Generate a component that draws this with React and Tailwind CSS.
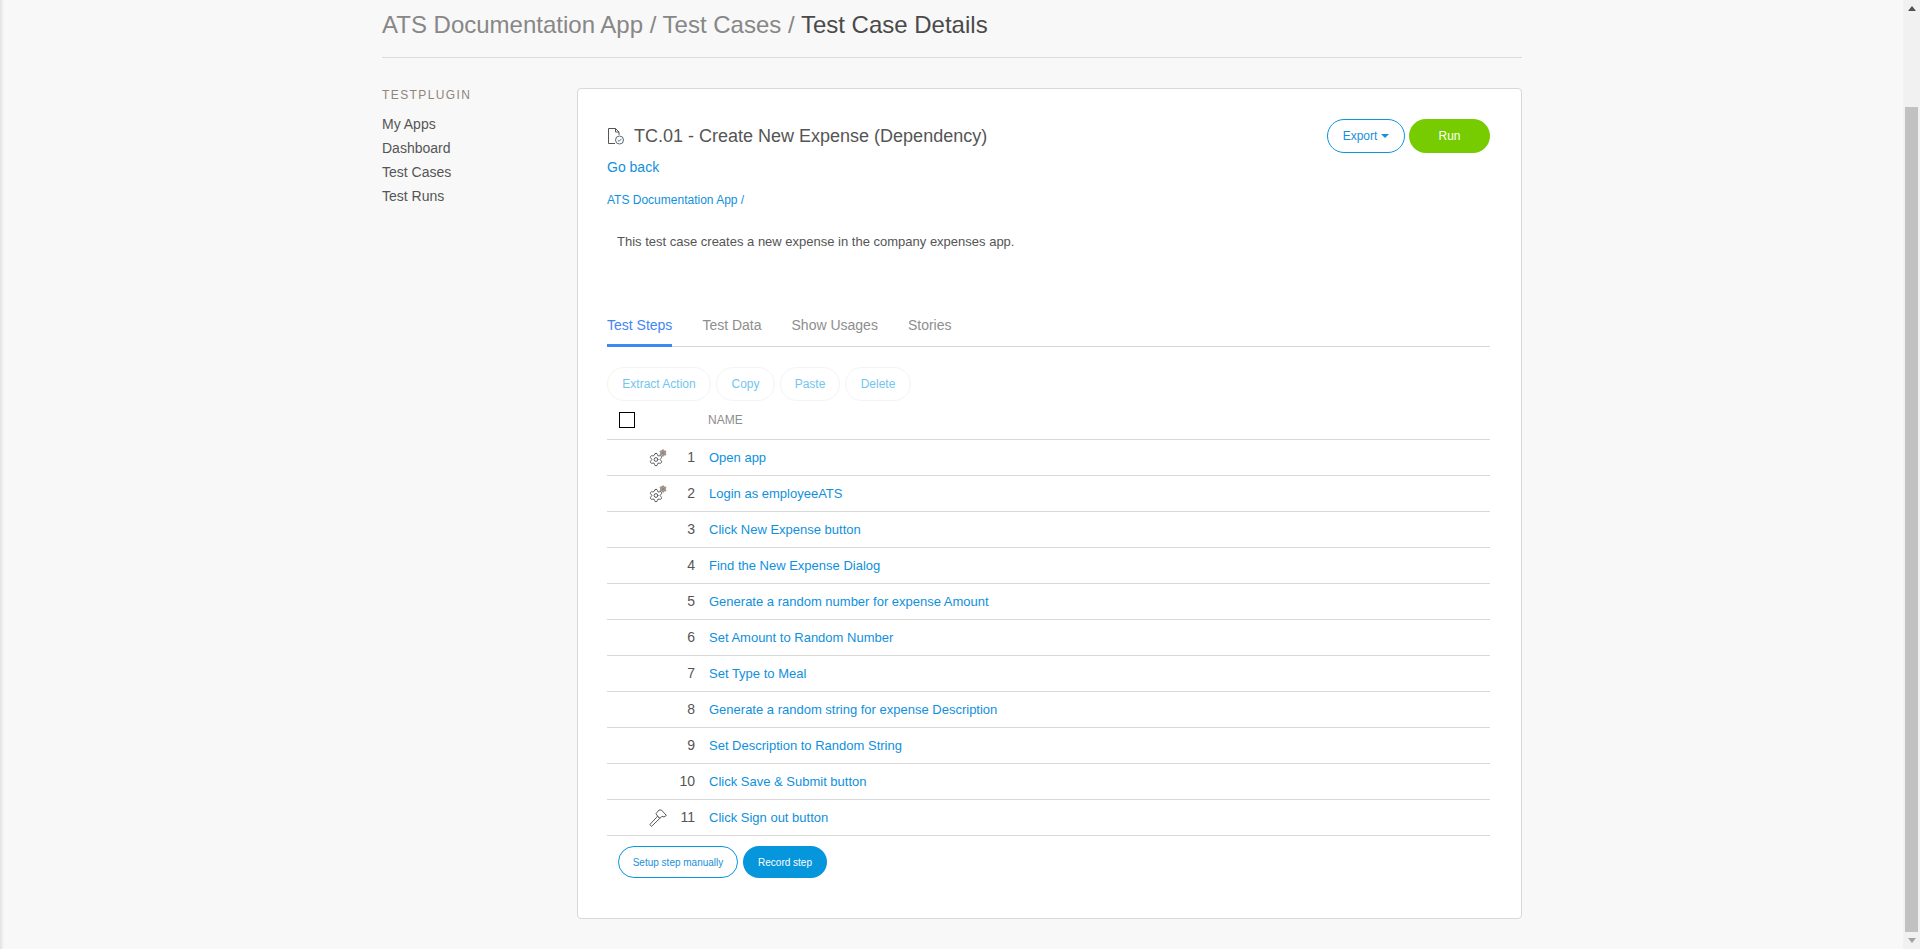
import { Settings } from 'lucide-react';

const steps = [
  { name: 'Open app', icon: 'gears' },
  { name: 'Login as employeeATS', icon: 'gears' },
  { name: 'Click New Expense button' },
  { name: 'Find the New Expense Dialog' },
  { name: 'Generate a random number for expense Amount' },
  { name: 'Set Amount to Random Number' },
  { name: 'Set Type to Meal' },
  { name: 'Generate a random string for expense Description' },
  { name: 'Set Description to Random String' },
  { name: 'Click Save & Submit button' },
  { name: 'Click Sign out button', icon: 'hammer' },
];

const tabs = ['Test Steps', 'Test Data', 'Show Usages', 'Stories'];
const actions = [
  { label: 'Extract Action', width: 'w-[104px]' },
  { label: 'Copy', width: 'w-[59px]' },
  { label: 'Paste', width: 'w-[60px]' },
  { label: 'Delete', width: 'w-[66px]' },
];
const nav = ['My Apps', 'Dashboard', 'Test Cases', 'Test Runs'];

function DocCheck() {
  return (
    <svg width="20" height="20" viewBox="0 0 20 20" fill="none" stroke="#555" strokeWidth="1">
      <path d="M9 17.5H2.5V2.5H9.5L13 6V9" />
      <path d="M9.5 2.5V6H13" />
      <circle cx="13.5" cy="14" r="4" stroke="#666" />
      <path d="M11.7 14L13.1 15.4L15.4 12.8" stroke="#2b7fc4" />
    </svg>
  );
}

function Gears() {
  return (
    <svg width="18" height="18" viewBox="0 0 18 18" fill="none">
      <Settings x="-0.5" y="3" width="15" height="15" stroke="#555" strokeWidth="1.6" />
      <Settings x="10" y="0" width="8" height="8" stroke="#857a74" fill="#a89d97" strokeWidth="2.2" />
    </svg>
  );
}

function Hammer() {
  return (
    <svg width="18" height="18" viewBox="0 0 18 18" fill="none" stroke="#5a5a5a" strokeWidth="1" strokeLinejoin="round">
      <path d="M0.8 15.6L8.6 7.2L10.8 9.4L2.6 17.3Z" />
      <path d="M7 4.6L10 1H12.4L17.4 6.4L15 8L13 7.2L10.8 9.4L8.6 7.2Z" />
    </svg>
  );
}

function PageScrollbar() {
  return (
    <div className="w-[17px] h-full bg-[#f1f1f1] flex flex-col items-center">
      <div className="h-[17px] flex items-center justify-center">
        <div className="w-0 h-0 border-x-[4px] border-x-transparent border-b-[5px] border-b-[#505050]" />
      </div>
      <div className="mt-[90px] w-[13px] h-[825px] bg-[#c1c1c1]" />
      <div className="flex-1 flex items-center justify-center">
        <div className="w-0 h-0 border-x-[4px] border-x-transparent border-t-[5px] border-t-[#a3a3a3]" />
      </div>
    </div>
  );
}

export default function App() {
  return (
    <div className="flex h-[949px] overflow-hidden bg-[#f8f8f8] text-[#555555] font-['Liberation_Sans',Arial,sans-serif]">
      <div className="w-[4px] h-full bg-linear-to-r from-[#e2e2e2] to-[#f8f8f8]" />
      <main className="flex-1 pl-[378px]">
        <div className="w-[1140px]">
          <div className="h-[58px] border-b border-[#dcdcdc] pt-[11px] text-[24px] leading-[28px] text-[#878787]">
            ATS Documentation App / Test Cases / <span className="text-[#4a4a4a]">Test Case Details</span>
          </div>

          <div className="flex mt-[30px]">
            <nav className="w-[195px]">
              <div className="text-[12px] leading-[14px] tracking-[1.4px] text-[#8f8578] mb-[10px]">TESTPLUGIN</div>
              {nav.map((item) => (
                <div key={item} className="text-[14px] leading-[24px]">{item}</div>
              ))}
            </nav>

            <section className="w-[945px] h-[831px] bg-white border border-[#d8d8d8] rounded-[4px] pl-[29px] pr-[31px] pt-[30px]">
              <div className="flex justify-between items-start">
                <div className="flex items-center h-[34px] gap-[8px] text-[18px] -ml-[1px]">
                  <DocCheck />
                  <span>TC.01 - Create New Expense (Dependency)</span>
                </div>
                <div className="flex gap-[4px]">
                  <button className="w-[78px] h-[34px] rounded-full border border-[#0a96dc] text-[#1a8fd8] text-[12px] flex items-center justify-center gap-[4px]">
                    Export
                    <span className="w-0 h-0 border-x-[4px] border-x-transparent border-t-[4px] border-t-[#1a8fd8]" />
                  </button>
                  <button className="w-[81px] h-[34px] rounded-full bg-[#76cc00] text-white text-[12px]">Run</button>
                </div>
              </div>

              <div className="text-[14px] leading-[20px] text-[#0f90dc] mt-[4px]">Go back</div>
              <div className="text-[12px] leading-[14px] text-[#0f90dc] mt-[16px]">ATS Documentation App /</div>
              <p className="text-[13px] leading-[16px] ml-[10px] mt-[27px]">
                This test case creates a new expense in the company expenses app.
              </p>

              <div className="flex gap-[30px] mt-[58px] h-[39px] border-b border-[#d8d8d8] text-[14px]">
                {tabs.map((tab, i) => (
                  <div
                    key={tab}
                    className={
                      i === 0
                        ? 'h-[39px] pt-[7px] border-b-[3px] border-[#4285f4] text-[#4285f4]'
                        : 'h-[39px] pt-[7px] text-[#8e8e8e]'
                    }
                  >
                    {tab}
                  </div>
                ))}
              </div>

              <div className="flex gap-[5px] mt-[20px]">
                {actions.map((a) => (
                  <button key={a.label} className={`${a.width} h-[34px] rounded-full border border-[#f4f4f4] text-[12px] text-[#73c5ee]`}>
                    {a.label}
                  </button>
                ))}
              </div>

              <div className="flex items-center h-[39px] border-b border-[#d8d8d8]">
                <div className="w-[16px] h-[16px] ml-[12px] border border-black" />
                <div className="ml-[73px] text-[12px] text-[#8d8d8d]">NAME</div>
              </div>

              {steps.map((step, i) => (
                <div key={step.name} className="flex items-center h-[36px] border-b border-[#d8d8d8]">
                  <div className="w-[18px] ml-[42px] h-[18px]">
                    {step.icon === 'gears' && <Gears />}
                    {step.icon === 'hammer' && <Hammer />}
                  </div>
                  <div className="w-[28px] text-right text-[14px]">{i + 1}</div>
                  <div className="ml-[14px] text-[13px] text-[#0f90dc]">{step.name}</div>
                </div>
              ))}

              <div className="flex gap-[5px] mt-[10px] ml-[11px]">
                <button className="w-[120px] h-[32px] rounded-full border border-[#0a96dc] text-[#1a8fd8] text-[10px]">Setup step manually</button>
                <button className="w-[84px] h-[32px] rounded-full bg-[#0696dc] text-white text-[10px]">Record step</button>
              </div>
            </section>
          </div>
        </div>
      </main>
      <PageScrollbar />
    </div>
  );
}
